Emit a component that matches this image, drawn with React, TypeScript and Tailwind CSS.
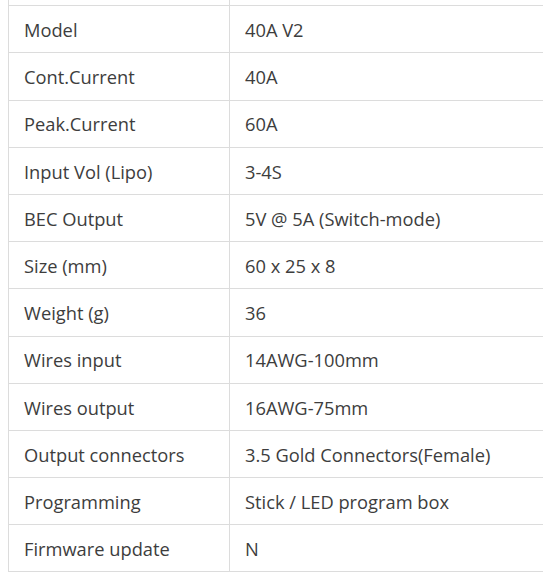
import React from "react";

const rows: [string, string][] = [
  ["Model", "40A V2"],
  ["Cont.Current", "40A"],
  ["Peak.Current", "60A"],
  ["Input Vol (Lipo)", "3-4S"],
  ["BEC Output", "5V @ 5A (Switch-mode)"],
  ["Size (mm)", "60 x 25 x 8"],
  ["Weight (g)", "36"],
  ["Wires input", "14AWG-100mm"],
  ["Wires output", "16AWG-75mm"],
  ["Output connectors", "3.5 Gold Connectors(Female)"],
  ["Programming", "Stick / LED program box"],
  ["Firmware update", "N"],
];

export default function App() {
  return (
    <div
      className="w-[543px] h-[576px] bg-white overflow-hidden"
      style={{ fontFamily: '"Open Sans", "Noto Sans", sans-serif' }}
    >
      <div className="ml-2 -mt-[41px] w-[560px] border-l border-[#dcdcdc] text-[18.3px] text-[#3d3d3d]">
        <div className="grid grid-cols-[221px_1fr] h-[47.2px] border-b border-[#dcdcdc]">
          <div className="border-r border-[#dcdcdc]" />
          <div />
        </div>
        {rows.map(([k, v]) => (
          <div
            key={k}
            className="grid grid-cols-[221px_1fr] h-[47.2px] border-b border-[#dcdcdc]"
          >
            <div className="flex items-center pl-[15px] pt-[1px] border-r border-[#dcdcdc]">{k}</div>
            <div className="flex items-center pl-[15px] pt-[1px]">{v}</div>
          </div>
        ))}
      </div>
    </div>
  );
}
